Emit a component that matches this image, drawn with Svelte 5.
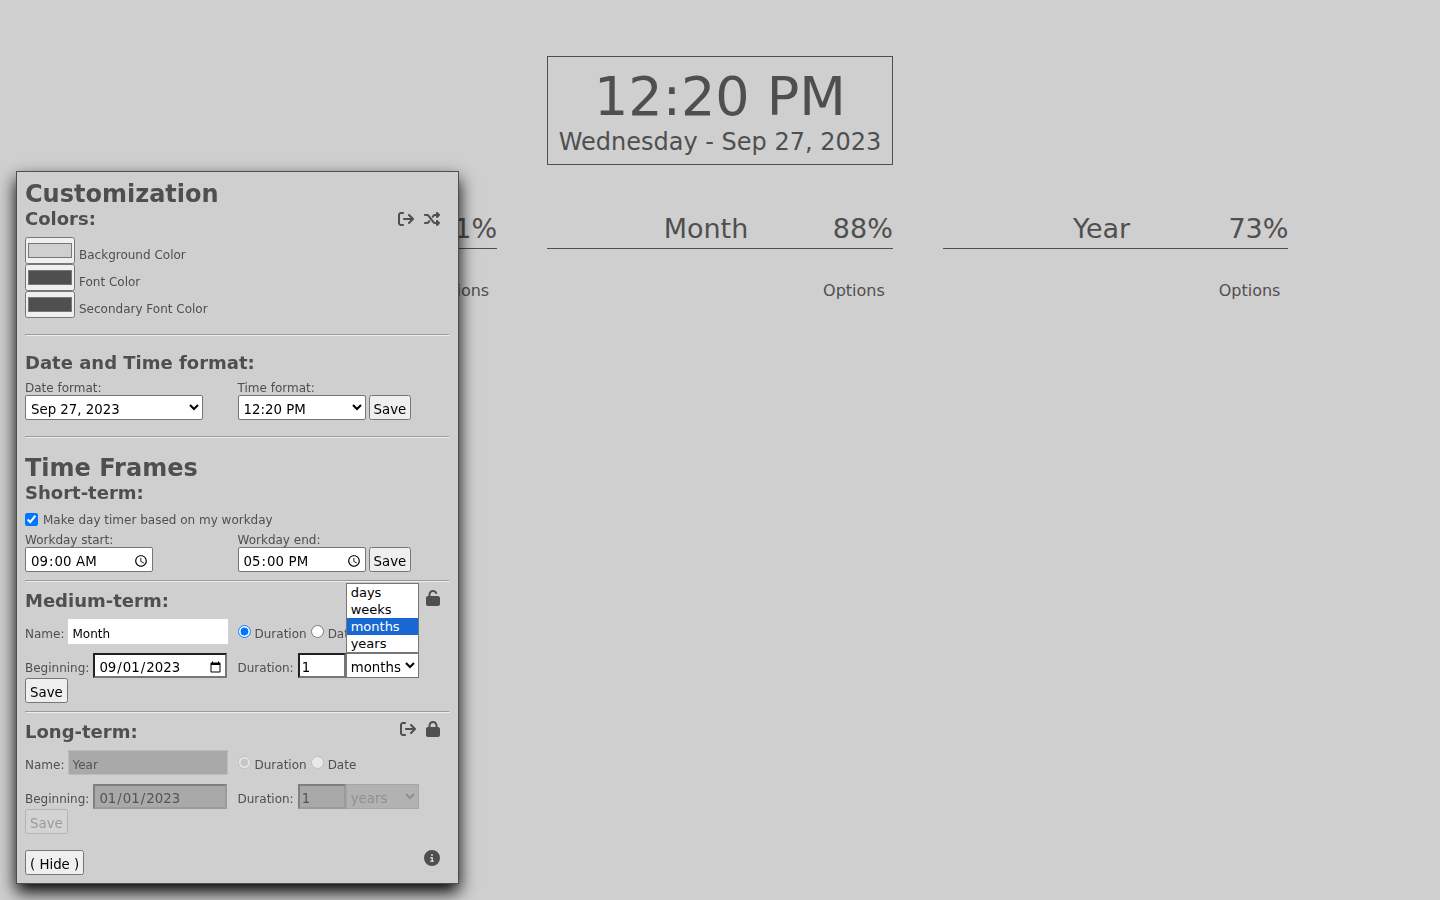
<script>
  const frames = [
    { name: 'Day', percent: '41%' },
    { name: 'Month', percent: '88%' },
    { name: 'Year', percent: '73%' }
  ];

  const units = ['days', 'weeks', 'months', 'years'];

  let colors = $state([
    { id: 'background', label: 'Background Color', value: '#cfcfcf' },
    { id: 'font', label: 'Font Color', value: '#4f4f4f' },
    { id: 'secondary', label: 'Secondary Font Color', value: '#4f4f4f' }
  ]);

  let terms = $state([
    { id: 'medium', title: 'Medium-term:', name: 'Month', begin: '2023-09-01', unit: 'months', mode: 'duration', amount: 1, locked: false, open: true },
    { id: 'long', title: 'Long-term:', name: 'Year', begin: '2023-01-01', unit: 'years', mode: 'duration', amount: 1, locked: true, open: false }
  ]);

  const icons = {
    export: {
      w: 512,
      d: 'M502.6 278.6c12.5-12.5 12.5-32.8 0-45.3l-128-128c-12.5-12.5-32.8-12.5-45.3 0s-12.5 32.8 0 45.3L402.7 224 192 224c-17.7 0-32 14.3-32 32s14.3 32 32 32l210.7 0-73.4 73.4c-12.5 12.5-12.5 32.8 0 45.3s32.8 12.5 45.3 0l128-128zM160 96c17.7 0 32-14.3 32-32s-14.3-32-32-32L96 32C43 32 0 75 0 128L0 384c0 53 43 96 96 96l64 0c17.7 0 32-14.3 32-32s-14.3-32-32-32l-64 0c-17.7 0-32-14.3-32-32l0-256c0-17.7 14.3-32 32-32l64 0z'
    },
    shuffle: {
      w: 512,
      d: 'M403.8 34.4c12-5 25.7-2.2 34.9 6.9l64 64c6 6 9.4 14.1 9.4 22.6s-3.4 16.6-9.4 22.6l-64 64c-9.2 9.2-22.9 11.9-34.9 6.9s-19.8-16.6-19.8-29.6V160H352c-10.1 0-19.6 4.7-25.6 12.8L284 229.3 244 176l31.2-41.6C293.3 110.2 321.8 96 352 96h32V64c0-12.9 7.8-24.6 19.8-29.6zM164 282.7L204 336l-31.2 41.6C154.7 401.8 126.2 416 96 416H32c-17.7 0-32-14.3-32-32s14.3-32 32-32H96c10.1 0 19.6-4.7 25.6-12.8L164 282.7zm274.6 188c-9.2 9.2-22.9 11.9-34.9 6.9s-19.8-16.6-19.8-29.6V416H352c-30.2 0-58.7-14.2-76.8-38.4L121.6 172.8c-6-8.1-15.5-12.8-25.6-12.8H32c-17.7 0-32-14.3-32-32s14.3-32 32-32H96c30.2 0 58.7 14.2 76.8 38.4L326.4 339.2c6 8.1 15.5 12.8 25.6 12.8h32V320c0-12.9 7.8-24.6 19.8-29.6s25.7-2.2 34.9 6.9l64 64c6 6 9.4 14.1 9.4 22.6s-3.4 16.6-9.4 22.6l-64 64z'
    },
    unlock: {
      w: 448,
      d: 'M144 144c0-44.2 35.8-80 80-80c31.9 0 59.4 18.6 72.3 45.7c7.6 16 26.7 22.8 42.6 15.2s22.8-26.7 15.2-42.6C331 33.7 281.5 0 224 0C144.5 0 80 64.5 80 144v48H64c-35.3 0-64 28.7-64 64V448c0 35.3 28.7 64 64 64H384c35.3 0 64-28.7 64-64V256c0-35.3-28.7-64-64-64H144V144z'
    },
    lock: {
      w: 448,
      d: 'M144 144v48H304V144c0-44.2-35.8-80-80-80s-80 35.8-80 80zM80 192V144C80 64.5 144.5 0 224 0s144 64.5 144 144v48h16c35.3 0 64 28.7 64 64V448c0 35.3-28.7 64-64 64H64c-35.3 0-64-28.7-64-64V256c0-35.3 28.7-64 64-64H80z'
    },
    info: {
      w: 512,
      d: 'M256 512A256 256 0 1 0 256 0a256 256 0 1 0 0 512zM216 336h24V272H216c-13.3 0-24-10.7-24-24s10.7-24 24-24h48c13.3 0 24 10.7 24 24v88h8c13.3 0 24 10.7 24 24s-10.7 24-24 24H216c-13.3 0-24-10.7-24-24s10.7-24 24-24zm40-208a32 32 0 1 1 0 64 32 32 0 1 1 0-64z'
    }
  };
</script>

{#snippet iconButton(name, label)}
  <button class="icon" type="button" aria-label={label}>
    <svg viewBox="0 0 {icons[name].w} 512" width={icons[name].w / 32} height="16" aria-hidden="true">
      <path d={icons[name].d} fill="currentColor" />
    </svg>
  </button>
{/snippet}

<main>
  <header class="clock">
    <div class="time">12:20 PM</div>
    <div class="date">Wednesday - Sep 27, 2023</div>
  </header>

  <div class="frames">
    {#each frames as frame}
      <section class="frame">
        <div class="frame-head">
          <span class="frame-name">{frame.name}</span>
          <span>{frame.percent}</span>
        </div>
        <button class="options" type="button">Options</button>
      </section>
    {/each}
  </div>
</main>

<aside class="panel">
  <h1>Customization</h1>
  <div class="head">
    <h2>Colors:</h2>
    <div class="tools">
      {@render iconButton('export', 'Export colors')}
      {@render iconButton('shuffle', 'Shuffle colors')}
    </div>
  </div>
  <div class="colors">
    {#each colors as color}
      <div class="color">
        <input id={color.id} type="color" bind:value={color.value} />
        <label for={color.id}>{color.label}</label>
      </div>
    {/each}
  </div>

  <hr class="wide" />

  <h2>Date and Time format:</h2>
  <div class="pair stacked">
    <div class="field">
      <label for="date-format">Date format:</label>
      <select id="date-format" class="date-format"><option>Sep 27, 2023</option></select>
    </div>
    <div class="field">
      <label for="time-format">Time format:</label>
      <div class="controls">
        <select id="time-format" class="time-box"><option>12:20 PM</option></select>
        <button class="btn" type="button">Save</button>
      </div>
    </div>
  </div>

  <hr class="wide" />

  <h1>Time Frames</h1>
  <h2>Short-term:</h2>
  <div class="check">
    <input id="workday" type="checkbox" checked />
    <label for="workday">Make day timer based on my workday</label>
  </div>
  <div class="pair">
    <div class="field">
      <label for="work-start">Workday start:</label>
      <input id="work-start" class="time-box" type="time" value="09:00" />
    </div>
    <div class="field">
      <label for="work-end">Workday end:</label>
      <div class="controls">
        <input id="work-end" class="time-box" type="time" value="17:00" />
        <button class="btn" type="button">Save</button>
      </div>
    </div>
  </div>

  {#each terms as term}
    <hr />
    <section class="term">
      <div class="head">
        <h2>{term.title}</h2>
        <div class="tools">
          {#if term.locked}
            {@render iconButton('export', 'Export time frame')}
            {@render iconButton('lock', 'Unlock')}
          {:else}
            {@render iconButton('unlock', 'Lock')}
          {/if}
        </div>
      </div>
      <div class="pair line">
        <div class="row">
          <label for="{term.id}-name">Name:</label>
          <input id="{term.id}-name" class="name" type="text" bind:value={term.name} disabled={term.locked} />
        </div>
        <div class="row">
          <input id="{term.id}-by-duration" type="radio" name="{term.id}-mode" value="duration" bind:group={term.mode} disabled={term.locked} />
          <label for="{term.id}-by-duration">Duration</label>
          <input id="{term.id}-by-date" type="radio" name="{term.id}-mode" value="date" bind:group={term.mode} disabled={term.locked} />
          <label for="{term.id}-by-date">Date</label>
        </div>
      </div>
      <div class="pair line">
        <div class="row">
          <label for="{term.id}-begin">Beginning:</label>
          <input id="{term.id}-begin" class="begin" type="date" bind:value={term.begin} disabled={term.locked} />
        </div>
        <div class="row">
          <label for="{term.id}-amount">Duration:</label>
          <div class="amount-group">
            <input id="{term.id}-amount" class="amount" type="number" bind:value={term.amount} disabled={term.locked} />
            <div class="unit-box">
              <select class="unit" aria-label="Duration unit" bind:value={term.unit} disabled={term.locked}>
                {#each units as unit}<option>{unit}</option>{/each}
              </select>
              {#if term.open}
                <ul class="menu">
                  {#each units as unit}
                    <li class:selected={unit === term.unit}>{unit}</li>
                  {/each}
                </ul>
              {/if}
            </div>
          </div>
        </div>
      </div>
      <button class="btn" type="button" disabled={term.locked}>Save</button>
    </section>
  {/each}

  <footer>
    <button class="btn" type="button">( Hide )</button>
    {@render iconButton('info', 'About')}
  </footer>
</aside>

<style>
  :global(body) {
    background: #cfcfcf;
    color: #4f4f4f;
    font-family: "DejaVu Sans", sans-serif;
  }

  main {
    padding-top: 56px;
  }

  .clock {
    box-sizing: border-box;
    width: 24%;
    margin: 0 auto 48px;
    padding: 8px 0;
    border: 1px solid #4f4f4f;
    text-align: center;
    white-space: nowrap;
  }

  .time {
    font-size: 54px;
    line-height: 63px;
  }

  .date {
    font-size: 24px;
    line-height: 28px;
  }

  .frames {
    display: grid;
    grid-template-columns: repeat(3, 24%);
    justify-content: center;
    column-gap: 50px;
  }

  .frame {
    display: flex;
    flex-direction: column;
    align-items: flex-end;
    gap: 32px;
  }

  .frame-head {
    display: flex;
    align-self: stretch;
    padding-bottom: 4px;
    border-bottom: 1px solid #4f4f4f;
    font-size: 27px;
    line-height: 31px;
  }

  .frame-name {
    flex: 1;
    padding-left: 32px;
    text-align: center;
  }

  .options {
    padding: 0 8px;
    border: 0;
    background: none;
    color: inherit;
    font: 16px/19px "DejaVu Sans", sans-serif;
  }

  .panel {
    position: fixed;
    left: 16px;
    bottom: 16px;
    width: 425px;
    padding: 8px;
    border: 1px solid #4f4f4f;
    background: #cfcfcf;
    box-shadow: 0 8px 16px #000;
    font-size: 12px;
    line-height: 14px;
  }

  h1,
  h2 {
    margin: 0;
    font-weight: bold;
  }

  h1 {
    font-size: 24px;
    line-height: 28px;
  }

  h2 {
    font-size: 18px;
    line-height: 22px;
  }

  hr {
    margin: 8px 0;
    border: 1px inset #eee;
  }

  hr.wide {
    margin: 16px 0;
  }

  .head {
    display: flex;
    justify-content: space-between;
  }

  .tools {
    display: flex;
    align-items: center;
    gap: 10px;
    padding-right: 10px;
  }

  .term .head {
    margin-bottom: 7px;
  }

  .term .tools {
    align-items: flex-start;
  }

  .icon {
    padding: 0;
    border: 0;
    background: none;
    color: inherit;
  }

  .icon svg {
    display: block;
  }

  .colors {
    margin-top: 7px;
  }

  .color {
    display: flex;
    align-items: flex-end;
    gap: 4px;
  }

  .color input {
    padding: 1px 0;
  }

  .color label {
    padding-bottom: 2px;
  }

  .pair {
    display: grid;
    grid-template-columns: 1fr 1fr;
  }

  .stacked {
    margin-top: 7px;
  }

  .field {
    display: flex;
    flex-direction: column;
    align-items: flex-start;
  }

  .row {
    display: flex;
    align-items: center;
    gap: 4px;
  }

  .row label {
    padding-top: 4px;
  }

  .controls {
    display: flex;
    gap: 3px;
  }

  input,
  select,
  .btn {
    margin: 0;
    font-family: "DejaVu Sans", sans-serif;
  }

  select,
  .name,
  .time-box,
  .begin,
  .amount,
  .btn {
    box-sizing: border-box;
    height: 25px;
  }

  .btn {
    padding: 4px 3px 1px;
  }

  .date-format {
    width: 178px;
  }

  .time-box {
    width: 128px;
  }

  select,
  .time-box {
    padding: 3px 1px 0;
    border: 1px solid #767676;
    border-radius: 2px;
    background-color: #fff;
  }

  input.time-box {
    padding: 3px 1px 0 4px;
  }

  .check {
    display: flex;
    align-items: center;
    gap: 5px;
    margin: 8px 0 6px;
  }

  .check label {
    padding-top: 1px;
  }

  .name {
    width: 160px;
    padding: 5px 4px 0;
    border: 0;
    font-size: 12px;
  }

  .begin {
    width: 134px;
    padding: 4px 1px 0 3px;
    border: 2px inset #767676;
  }

  .amount {
    width: 48px;
    padding: 3px 2px 0;
    border: 2px inset #767676;
  }

  .name:disabled,
  .begin:disabled,
  .amount:disabled {
    background: #a9a9a9;
  }

  .name:disabled {
    padding: 4px 3px 0;
    border: 1px solid #bcbcbc;
  }

  .begin:disabled,
  .amount:disabled {
    border-color: #9b9b9b;
    border-top-color: #808080;
    border-left-color: #808080;
    border-style: solid;
  }

  .line {
    margin-bottom: 9px;
  }

  .line + .line {
    margin-bottom: 0;
  }

  .amount-group {
    display: flex;
  }

  .unit-box {
    position: relative;
  }

  .unit {
    width: 73px;
    border-radius: 0;
    padding-left: 0;
  }

  .unit:disabled {
    border-color: #a6a6a6;
    background-color: #b2b2b2;
    color: #909090;
    opacity: 1;
  }

  .menu {
    position: absolute;
    right: 0;
    bottom: 25px;
    left: 0;
    margin: 0;
    padding: 0;
    border: 1px solid #767676;
    background: #fff;
    color: #000;
    font-size: 13px;
    line-height: 17px;
    list-style: none;
  }

  .menu li {
    padding-left: 4px;
  }

  .menu .selected {
    background: #1967d2;
    color: #fff;
  }

  footer {
    display: flex;
    justify-content: space-between;
    align-items: flex-start;
    margin-top: 16px;
    padding-right: 10px;
  }
</style>
